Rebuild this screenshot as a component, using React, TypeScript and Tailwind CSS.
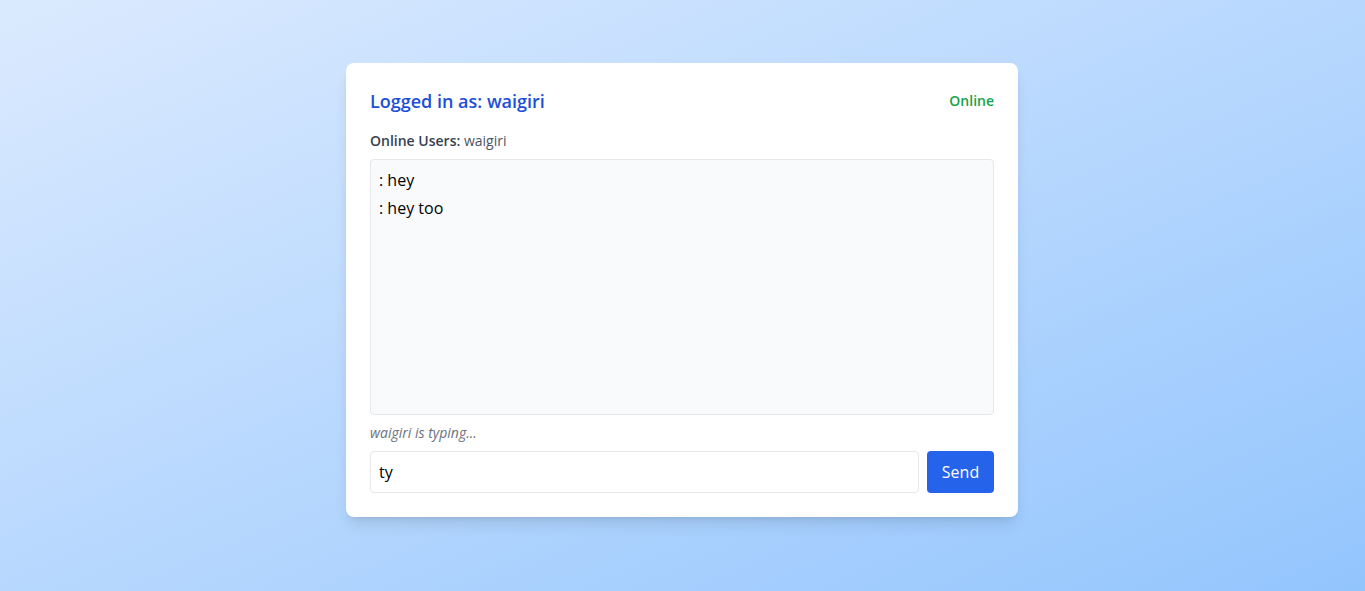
import React from 'react';

const App = () => {
  return (
    <div
      className="min-h-screen bg-linear-to-br from-[#dbeafe] to-[#93c5fd] pt-[63px] font-['Open_Sans',sans-serif]"
    >
      <div className="ml-[346px] w-[672px] bg-white rounded-lg shadow-lg p-6">
        {/* Header */}
        <div className="flex justify-between items-center mb-4">
          <h1 className="text-lg leading-7 font-semibold text-[#1d4ed8]">Logged in as: waigiri</h1>
          <span className="text-sm font-semibold text-[#16a34a]">Online</span>
        </div>

        {/* Online users */}
        <div className="text-sm leading-5 text-[#4b5563] mb-2">
          <span className="font-semibold text-[#374151]">Online Users:</span> waigiri
        </div>

        {/* Messages */}
        <div className="h-64 overflow-y-auto border border-[#e5e7eb] rounded bg-[#f9fafb] p-2">
          <div className="mb-1 leading-6 text-black">: hey</div>
          <div className="mb-1 leading-6 text-black">: hey too</div>
        </div>

        <div className="mt-2 mb-2 text-sm leading-5 italic text-[#6b7280]">waigiri is typing...</div>

        {/* Input row */}
        <div className="flex gap-2">
          <input
            className="flex-1 h-[42px] border border-[#e5e7eb] rounded px-2 leading-6 text-black outline-none"
            defaultValue="ty"
          />
          <button className="w-[67px] h-[42px] bg-[#2563eb] text-white rounded leading-6">Send</button>
        </div>
      </div>
    </div>
  );
};

export default App;
